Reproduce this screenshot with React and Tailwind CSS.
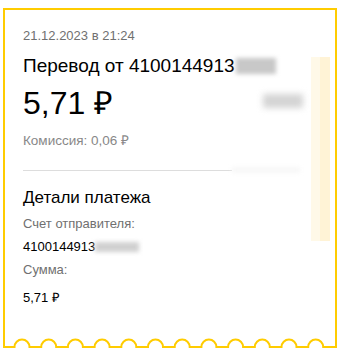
import React from "react";

const bumps = [19, 45.7, 72.4, 99.1, 125.8, 152.5, 179.2, 205.9, 232.6, 259.3, 286, 312.7];

function WavyEdge() {
  // bottom edge of the receipt: flat line with small half-circle bumps
  let d = "M1 0 V9";
  bumps.forEach((cx) => {
    d += ` H${cx - 7.5} A7.5 7.5 0 0 1 ${cx + 7.5} 9`;
  });
  d += " H333 V0";
  return (
    <svg width="334" height="12" viewBox="0 0 334 12" className="block">
      <path d={d} fill="none" stroke="#ffcc00" strokeWidth="2" />
    </svg>
  );
}

export default function App() {
  return (
    <div className="w-[360px] h-[354px] bg-white pt-[8px] pl-[3px] font-['Liberation_Sans',Arial,sans-serif] overflow-hidden">
      <div className="w-[334px]">
        <div className="h-[330px] border-x-2 border-t-2 border-[#ffcc00] flex">
          <div className="flex-1 pl-[18px] pt-[18px]">
            <p className="text-[13px] leading-[16px] text-[#707070]">21.12.2023 в 21:24</p>

            <div className="mt-[10px] flex items-center">
              <span className="text-[19px] leading-[24px] text-black">Перевод от 4100144913</span>
              <span className="ml-[1px] w-[40px] h-[16px] bg-[#c8c8c8] blur-[2px]" />
            </div>

            <div className="mt-[6px] flex items-center justify-between pr-[2px]">
              <span className="text-[32px] leading-[38px] text-black">5,71 ₽</span>
              <span className="mr-[6px] mb-[4px] w-[40px] h-[14px] bg-[#d4d4d4] blur-[3px]" />
            </div>

            <p className="mt-[11px] text-[13.5px] leading-[16px] text-[#888888]">Комиссия: 0,06 ₽</p>

            <div className="mt-[18px] flex items-center">
              <div className="w-[209px] h-px bg-[#dddddd]" />
              <div className="w-[68px] h-[6px] bg-[#f7f7f7] blur-[2px]" />
            </div>

            <p className="mt-[14px] text-[17px] leading-[22px] text-black">Детали платежа</p>
            <p className="mt-[7px] text-[13px] leading-[16px] text-[#707070]">Счет отправителя:</p>

            <div className="mt-[7px] flex items-center">
              <span className="text-[13px] leading-[16px] text-black">4100144913</span>
              <span className="w-[44px] h-[10px] bg-[#d0d0d0] blur-[2px]" />
            </div>

            <p className="mt-[7px] text-[13px] leading-[16px] text-[#707070]">Сумма:</p>
            <p className="mt-[12px] text-[13px] leading-[16px] text-black">5,71 ₽</p>
          </div>

          <div className="mt-[47px] mr-[5px] flex h-[184px] w-[19px]">
            <div className="w-[9px] bg-[#fff9e8]" />
            <div className="w-[10px] bg-[#fff3d6]" />
          </div>
        </div>
        <WavyEdge />
      </div>
    </div>
  );
}
